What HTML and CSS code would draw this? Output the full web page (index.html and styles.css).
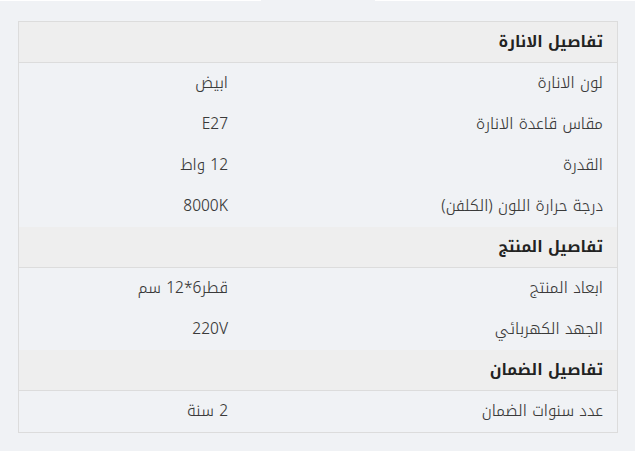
FILE: index.html
```html
<!DOCTYPE html>
<html lang="ar" dir="rtl">
<head>
<meta charset="utf-8">
<link rel="stylesheet" href="styles.css">
</head>
<body>
<div class="topbar"><span class="seg seg-a"></span><span class="gap"></span><span class="seg seg-b"></span></div>
<div class="specs">
  <div class="section">تفاصيل الانارة</div>
  <div class="row"><div class="label">لون الانارة</div><div class="value">ابيض</div></div>
  <div class="row"><div class="label">مقاس قاعدة الانارة</div><div class="value">E27</div></div>
  <div class="row"><div class="label">القدرة</div><div class="value">12 واط</div></div>
  <div class="row"><div class="label">درجة حرارة اللون (الكلفن)</div><div class="value">8000K</div></div>
  <div class="section">تفاصيل المنتج</div>
  <div class="row"><div class="label">ابعاد المنتج</div><div class="value">قطر6*12 سم</div></div>
  <div class="row"><div class="label">الجهد الكهربائي</div><div class="value">220V</div></div>
  <div class="section">تفاصيل الضمان</div>
  <div class="row"><div class="label">عدد سنوات الضمان</div><div class="value">2 سنة</div></div>
</div>
</body>
</html>
```
FILE: styles.css
```css
html, body {
  margin: 0;
  padding: 0;
  background: #f0f2f5;
}
body {
  font-family: "Noto Kufi Arabic", "Noto Sans", sans-serif;
  font-size: 15.5px;
  color: #3a3a3a;
  width: 635px;
  height: 451px;
}
.topbar {
  display: flex;
  direction: ltr;
  height: 1px;
}
.seg { background: #fff; height: 1px; }
.seg-a { width: 261px; }
.gap { width: 114px; }
.seg-b { flex: 1; }
.specs {
  margin: 20px 17px 0 18px;
  border: 1px solid #dcdcdc;
}
.section {
  height: 40px;
  line-height: 40px;
  background: #eeeeee;
  border-bottom: 1px solid #dcdcdc;
  padding: 0 14px;
  font-weight: bold;
  color: #222;
}
.row {
  display: grid;
  grid-template-columns: 375px 1fr;
  height: 41px;
  line-height: 41px;
  font-weight: 300;
}
.label, .value {
  padding: 0 14px;
}
```
